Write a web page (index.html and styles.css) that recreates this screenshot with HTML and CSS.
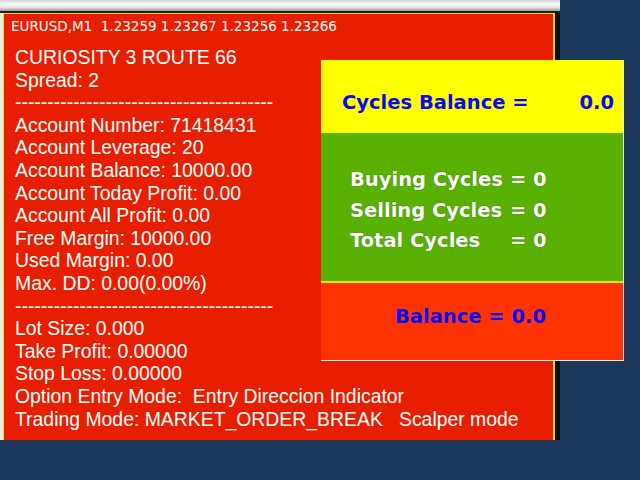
FILE: index.html
```html
<!DOCTYPE html>
<html>
<head>
<meta charset="utf-8">
<link rel="stylesheet" href="styles.css">
</head>
<body>
<div class="window">
  <div class="titlebar"></div>
  <div class="chart">
    <div class="symbol">EURUSD,M1  1.23259 1.23267 1.23256 1.23266</div>
    <div class="info">
      <div class="line">CURIOSITY 3 ROUTE 66</div>
      <div class="line">Spread: 2</div>
      <div class="line">----------------------------------------</div>
      <div class="line">Account Number: 71418431</div>
      <div class="line">Account Leverage: 20</div>
      <div class="line">Account Balance: 10000.00</div>
      <div class="line">Account Today Profit: 0.00</div>
      <div class="line">Account All Profit: 0.00</div>
      <div class="line">Free Margin: 10000.00</div>
      <div class="line">Used Margin: 0.00</div>
      <div class="line">Max. DD: 0.00(0.00%)</div>
      <div class="line">----------------------------------------</div>
      <div class="line">Lot Size: 0.000</div>
      <div class="line">Take Profit: 0.00000</div>
      <div class="line">Stop Loss: 0.00000</div>
      <div class="line">Option Entry Mode:  Entry Direccion Indicator</div>
      <div class="line">Trading Mode: MARKET_ORDER_BREAK   Scalper mode</div>
    </div>
  </div>
</div>
<div class="panel">
  <div class="sec-yellow">
    <span>Cycles Balance =</span>
    <span>0.0</span>
  </div>
  <div class="sec-green">
    <div class="cycles">
      <span>Buying Cycles</span><span>= 0</span>
      <span>Selling Cycles</span><span>= 0</span>
      <span>Total Cycles</span><span>= 0</span>
    </div>
  </div>
  <div class="sec-red">Balance = 0.0</div>
</div>
</body>
</html>
```
FILE: styles.css
```css
html, body {
  margin: 0;
  padding: 0;
}
body {
  width: 640px;
  height: 480px;
  background: #1b375c;
  position: relative;
  overflow: hidden;
}
.window {
  width: 560px;
  height: 440px;
  display: flex;
  flex-direction: column;
}
.titlebar {
  height: 11px;
  background: linear-gradient(#d4d4d4, #fbfbfb 35%, #e6e6e6 65%, #9a9a9a);
  border-bottom: 2px solid #1e1e1e;
  flex: none;
}
.chart {
  flex: 1;
  margin-left: 3px;
  margin-right: 5px;
  background: #e81e00;
  border-top: 1px solid #ffd200;
  border-left: 1px solid #f2e000;
  border-right: 2px solid #ffd800;
  box-shadow: -3px 0 0 #ececec, 5px 0 0 #0a0a0a;
  color: #ffffff;
}
.symbol {
  font-family: "DejaVu Sans", sans-serif;
  font-size: 13.5px;
  line-height: 16px;
  padding: 4px 0 0 7px;
  white-space: pre;
}
.info {
  margin-top: 12px;
  padding-left: 11px;
  font-family: "Liberation Sans", Arial, sans-serif;
  font-size: 19.4px;
  line-height: 22.6px;
}
.line {
  white-space: pre;
}
.panel {
  position: absolute;
  left: 321px;
  top: 60px;
  width: 302px;
  border-right: 1px solid #e8e8e8;
  border-bottom: 1px solid #f0f0f0;
  font-family: "DejaVu Sans", Verdana, sans-serif;
  font-weight: bold;
  font-size: 19.5px;
  line-height: 23px;
}
.sec-yellow {
  height: 73px;
  box-sizing: border-box;
  background: #ffff00;
  color: #0a0af0;
  padding: 31px 9px 0 21px;
  display: flex;
  justify-content: space-between;
}
.sec-green {
  height: 150px;
  box-sizing: border-box;
  background: #58b000;
  border-bottom: 2px solid #d8f000;
  padding: 32px 0 0 29px;
  color: #ffffff;
  text-shadow: 0 0 1px rgba(0, 60, 0, 0.6);
}
.cycles {
  display: grid;
  grid-template-columns: auto auto;
  justify-content: start;
  column-gap: 7px;
  line-height: 30.5px;
}
.cycles span:nth-child(even) {
  text-align: right;
}
.sec-red {
  height: 77px;
  box-sizing: border-box;
  background: #ff3300;
  color: #0a0af0;
  padding: 22px 0 0 74px;
}
```
